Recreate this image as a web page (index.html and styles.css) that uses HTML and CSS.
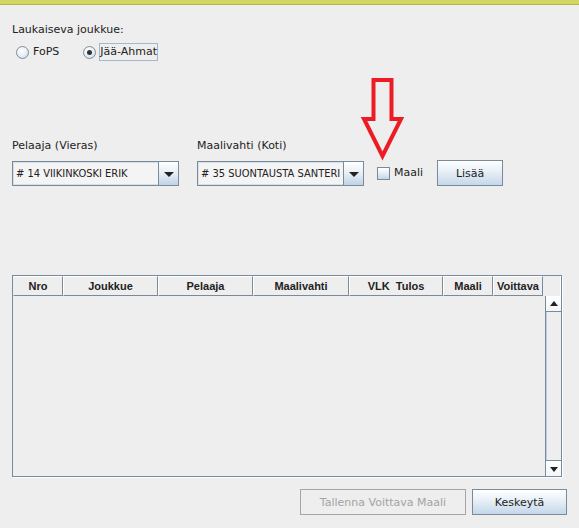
FILE: index.html
```html
<!DOCTYPE html>
<html>
<head>
<meta charset="utf-8">
<link rel="stylesheet" href="styles.css">
</head>
<body>
<div class="topbar"></div>
<div class="panel">
  <div class="title">Laukaiseva joukkue:</div>
  <div class="radios">
    <div class="radio first"><span class="circle"></span><span class="rlabel">FoPS</span></div>
    <div class="radio second"><span class="circle on"></span><span class="rlabel focus">Jää-Ahmat</span></div>
  </div>

  <div class="fields">
    <div class="field">
      <div class="flabel">Pelaaja (Vieras)</div>
      <div class="combo"><span class="ctext"># 14 VIIKINKOSKI ERIK</span><span class="carrow"><span class="tri-down"></span></span></div>
    </div>
    <div class="field">
      <div class="flabel">Maalivahti (Koti)</div>
      <div class="combo"><span class="ctext"># 35 SUONTAUSTA SANTERI</span><span class="carrow"><span class="tri-down"></span></span></div>
    </div>
    <div class="check"><span class="box"></span><span>Maali</span></div>
    <button class="btn add">Lisää</button>
  </div>

  <div class="scrollpane">
    <div class="viewport">
      <div class="header">
        <div class="th w50">Nro</div>
        <div class="th w95">Joukkue</div>
        <div class="th w95">Pelaaja</div>
        <div class="th w96">Maalivahti</div>
        <div class="th w94 pre">VLK  Tulos</div>
        <div class="th w50">Maali</div>
        <div class="th w50">Voittava</div>
      </div>
    </div>
    <div class="sidecol">
      <div class="corner"></div>
      <div class="vscroll">
        <div class="sbtn up"><span class="tri-up"></span></div>
        <div class="track"></div>
        <div class="sbtn down"><span class="tri-down small"></span></div>
      </div>
    </div>
  </div>

  <div class="actions">
    <button class="btn disabled save">Tallenna Voittava Maali</button>
    <button class="btn cancel">Keskeytä</button>
  </div>
</div>

<svg class="annot" width="48" height="88" viewBox="0 0 48 88">
  <polygon points="13.5,4 31.5,4 31.5,43 41,43 22.5,80 4,43 13.5,43" fill="none" stroke="#ed1c24" stroke-width="4" stroke-linejoin="miter"/>
</svg>
</body>
</html>
```
FILE: styles.css
```css
html, body {
  margin: 0;
  padding: 0;
}
body {
  width: 579px;
  height: 528px;
  overflow: hidden;
  background: #eeeeee;
  font-family: "DejaVu Sans", "Liberation Sans", sans-serif;
  font-size: 11px;
  color: #222222;
  position: relative;
}
.topbar {
  height: 4px;
  background: #d2d762;
  border-bottom: 1px solid #b3b944;
}
.panel {
  padding: 18px 12px 0 12px;
}
.title {
  height: 14px;
  line-height: 14px;
}
.radios {
  margin-top: 6px;
  height: 18px;
  display: flex;
  align-items: center;
}
.radio {
  display: flex;
  align-items: center;
}
.radio.first {
  margin-left: 4px;
}
.radio.second {
  margin-left: 23px;
}
.circle {
  width: 11px;
  height: 11px;
  border-radius: 50%;
  border: 1px solid #7f8d9b;
  background: radial-gradient(circle at 40% 35%, #ffffff 0%, #eef3f8 40%, #c3d5e8 100%);
  position: relative;
  flex: none;
}
.circle.on::after {
  content: "";
  position: absolute;
  left: 3px;
  top: 3px;
  width: 5px;
  height: 5px;
  border-radius: 50%;
  background: #333333;
}
.rlabel {
  margin-left: 3px;
  line-height: 16px;
  padding: 0;
  border: 1px solid transparent;
}
.rlabel.focus {
  border-color: #a3b8cc;
}
.fields {
  margin-top: 78px;
  display: flex;
  align-items: flex-end;
}
.field {
  display: flex;
  flex-direction: column;
  width: 167px;
  margin-right: 18px;
}
.field + .field {
  margin-right: 13px;
}
.flabel {
  height: 14px;
  line-height: 14px;
  margin-bottom: 8px;
}
.combo {
  height: 23px;
  border: 1px solid #7a8a99;
  display: flex;
  background: #f3f3f3;
}
.ctext {
  flex: 1;
  border: 1px solid #d6e0eb;
  border-right: none;
  line-height: 21px;
  padding-left: 2px;
  white-space: nowrap;
  overflow: hidden;
  background: #f4f4f4;
  font-family: "DejaVu Sans Condensed", "DejaVu Sans", sans-serif;
  font-stretch: condensed;
}
.carrow {
  width: 19px;
  border-left: 1px solid #7a8a99;
  background: linear-gradient(#ffffff, #e9f0f7 45%, #bfd3e6);
  display: flex;
  align-items: center;
  justify-content: center;
}
.tri-down {
  width: 0;
  height: 0;
  border-left: 5px solid transparent;
  border-right: 5px solid transparent;
  border-top: 5px solid #222222;
  margin-top: 1px;
}
.tri-down.small {
  border-left-width: 4px;
  border-right-width: 4px;
}
.tri-up {
  width: 0;
  height: 0;
  border-left: 4px solid transparent;
  border-right: 4px solid transparent;
  border-bottom: 5px solid #222222;
}
.check {
  height: 25px;
  display: flex;
  align-items: center;
  margin-bottom: 1px;
}
.box {
  width: 11px;
  height: 11px;
  border: 1px solid #7a8a99;
  background: linear-gradient(#ffffff, #e8eff7 45%, #c3d6e9);
  margin-right: 4px;
  margin-top: 1px;
}
.btn {
  font-family: inherit;
  font-size: 11px;
  color: #222222;
  height: 26px;
  border: 1px solid #7a8a99;
  background: linear-gradient(#ffffff, #eaf1f8 40%, #c4d7ea);
  padding: 0;
  margin: 0;
}
.btn.add {
  width: 66px;
  margin-left: 14px;
}
.btn.disabled {
  color: #a3a3a3;
  border-color: #a6a6a6;
  background: #eeeeee;
}
.scrollpane {
  margin-top: 89px;
  width: 548px;
  height: 200px;
  border: 1px solid #7a8a99;
  box-shadow: 1px 1px 0 #ffffff;
  display: flex;
}
.viewport {
  width: 532px;
  height: 200px;
}
.header {
  display: flex;
  height: 20px;
}
.th {
  box-sizing: border-box;
  height: 20px;
  border-left: 1px solid #ffffff;
  border-top: 1px solid #ffffff;
  border-right: 1px solid #7a8a99;
  border-bottom: 1px solid #7a8a99;
  font-family: "Liberation Sans", Arial, sans-serif;
  font-weight: bold;
  font-size: 11px;
  text-align: center;
  line-height: 18px;
  white-space: nowrap;
}
.th:first-child {
  border-left: 1px solid #eeeeee;
}
.th.pre {
  white-space: pre;
}
.w50 { width: 50px; }
.w94 { width: 94px; }
.w95 { width: 95px; }
.w96 { width: 96px; }
.sidecol {
  width: 16px;
  display: flex;
  flex-direction: column;
}
.corner {
  height: 20px;
  box-sizing: border-box;
  border-right: 1px solid #ffffff;
}
.vscroll {
  flex: 1;
  display: flex;
  flex-direction: column;
  box-sizing: border-box;
  border-left: 1px solid #7a8a99;
}
.sbtn {
  height: 15px;
  background: linear-gradient(#ffffff, #f3f6f9);
  display: flex;
  align-items: center;
  justify-content: center;
}
.sbtn.up {
  border-bottom: 1px solid #7a8a99;
}
.sbtn.down {
  border-top: 1px solid #7a8a99;
}
.track {
  flex: 1;
  background: #eeeeee;
  border-left: 1px solid #b8cfe5;
}
.actions {
  margin-top: 12px;
  display: flex;
  justify-content: flex-end;
}
.btn.save {
  width: 166px;
}
.btn.cancel {
  width: 95px;
  margin-left: 6px;
}
.annot {
  position: absolute;
  left: 360px;
  top: 76px;
}
```
